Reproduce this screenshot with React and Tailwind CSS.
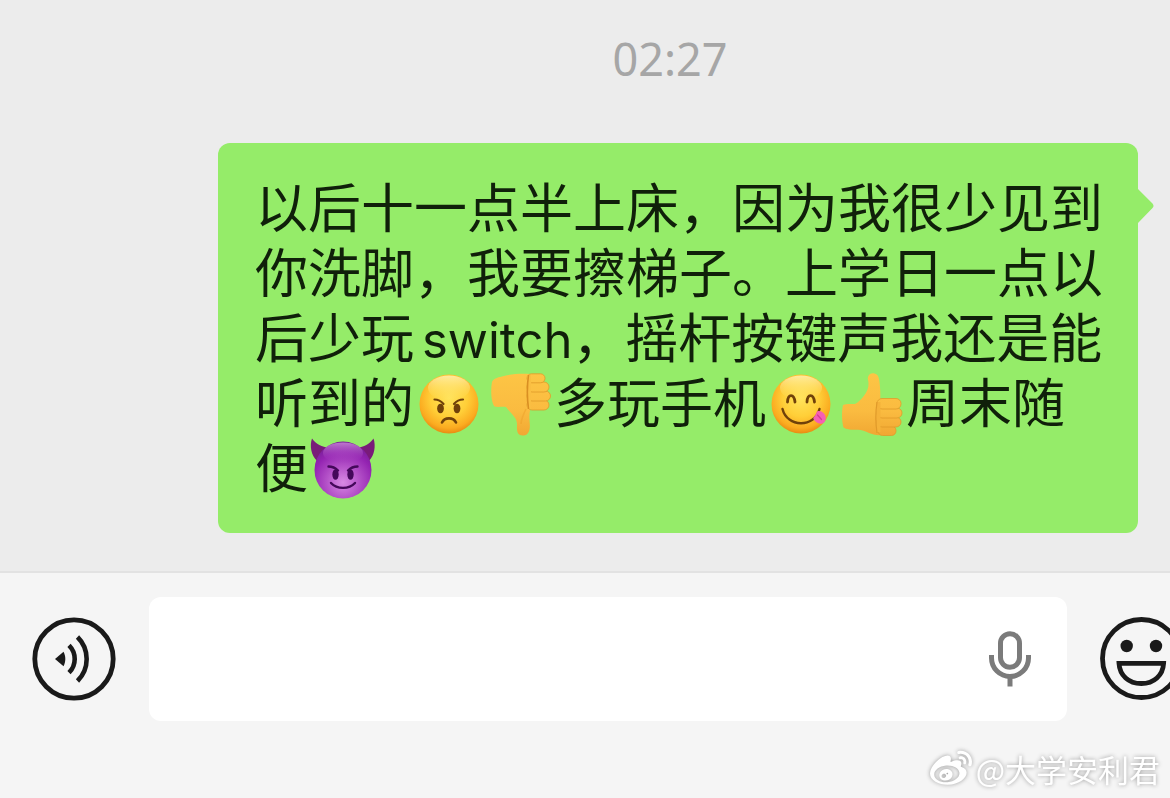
import { useState } from "react";
import { FaWeibo } from "react-icons/fa";

const emojiClass = "inline-block w-[70px] h-16 -my-3 align-[-2px]";

function FaceGradients({ id }) {
  return (
    <defs>
      <radialGradient id={`${id}-fill`} cx="0.5" cy="0.4" r="0.62">
        <stop offset="0" stopColor="#ffe35c" />
        <stop offset="0.5" stopColor="#ffcf38" />
        <stop offset="0.82" stopColor="#fbab20" />
        <stop offset="1" stopColor="#e4850f" />
      </radialGradient>
      <linearGradient id={`${id}-shine`} x1="0" y1="0" x2="0" y2="1">
        <stop offset="0" stopColor="#fffbd0" stopOpacity="0.7" />
        <stop offset="1" stopColor="#ffe566" stopOpacity="0" />
      </linearGradient>
    </defs>
  );
}

function AngryFace() {
  return (
    <svg viewBox="0 0 70 64" className={emojiClass} role="img" aria-label="angry face">
      <FaceGradients id="angry" />
      <circle cx="35" cy="31" r="29.5" fill="url(#angry-fill)" />
      <ellipse cx="35" cy="15" rx="21" ry="12.5" fill="url(#angry-shine)" />
      <ellipse cx="26.5" cy="35.5" rx="3.4" ry="4.8" fill="#70410a" />
      <ellipse cx="43" cy="35.5" rx="3.4" ry="4.8" fill="#70410a" />
      <g fill="none" stroke="#70410a" strokeLinecap="round" strokeWidth="2.2">
        <path d="M20.5 26.5c3.5 0 6.500 1.500 9 4.500" />
        <path d="M49 26.500c-3.500 0-6.500 1.500-9 4.500" />
        <path d="M28 49.500c2.500-5.500 11.500-5.500 14 0" strokeWidth="2.600" />
      </g>
    </svg>
  );
}

function YummyFace() {
  return (
    <svg viewBox="0 0 70 64" className={emojiClass} role="img" aria-label="face savoring food">
      <FaceGradients id="yummy" />
      <circle cx="35" cy="31" r="29.5" fill="url(#yummy-fill)" />
      <ellipse cx="35" cy="15" rx="21" ry="12.5" fill="url(#yummy-shine)" />
      <g fill="none" stroke="#70410a" strokeLinecap="round">
        <path d="M21.500 29c.5-8.500 6.500-8.500 7.500 0" strokeWidth="2.800" />
        <path d="M41 29c.5-8.500 6.500-8.500 7.500 0" strokeWidth="2.800" />
        <path d="M16.500 36c4.500 18.500 32 19.500 37 0" strokeWidth="2.400" />
      </g>
      <path
        d="M51 38.500c3-1.500 6.500.5 8 3.500 1.500 3.500.5 7-2 8.300-2.700 1.300-5.500 0-8-2.300-1.500-1.500-2-2.500-1.500-3.500 1.500-1.500 2.500-3.500 3.500-6z"
        fill="#f55fb4"
      />
      <path d="M51.500 42l4 4.500" stroke="#d43c94" strokeWidth="1.200" strokeLinecap="round" />
    </svg>
  );
}

function HandGradient({ id }) {
  return (
    <defs>
      <linearGradient id={id} x1="0" y1="0" x2="0" y2="64" gradientUnits="userSpaceOnUse">
        <stop offset="0" stopColor="#fdc545" />
        <stop offset="0.6" stopColor="#fabb40" />
        <stop offset="1" stopColor="#f0a632" />
      </linearGradient>
    </defs>
  );
}

function ThumbDown() {
  return (
    <svg viewBox="0 0 70 64" className={emojiClass} role="img" aria-label="thumbs down">
      <HandGradient id="thumb-down" />
      <path
        d="M8 9C9 6 13 4.500 18 3.500 27 1 36 .3 46 1v36.500c-.8 4.500-.7 8.500-.2 13.500.5 6-1.300 11-6.300 11.500-5.500.5-7-3.500-6.500-9.500.2-4-.5-6.500-3-9.500-3-3.500-5.500-6-8-9.500-3.500-.7-7.500.5-11.500-.5C7 29 6.500 17 8 9z"
        fill="url(#thumb-down)"
      />
      <path d="M42 36c-2 4-4.500 9-5 15" fill="none" stroke="#eda02a" strokeWidth="1.500" opacity="0.5" />
      <g fill="url(#thumb-down)" stroke="#e09a2a" strokeWidth="0.800">
        <rect x="43" y="27" width="22" height="10" rx="5" />
        <rect x="43" y="18" width="23.500" height="10" rx="5" />
        <rect x="43" y="9" width="22" height="10" rx="5" />
        <rect x="43" y="0.800" width="18" height="9" rx="4.500" />
      </g>
      <path d="M45 2v34" fill="none" stroke="#fabe42" strokeWidth="4" />
      <path d="M44.500 2c-1.500 11-1.500 23 0 34" fill="none" stroke="#d98f22" strokeWidth="1.600" />
    </svg>
  );
}

function ThumbUp() {
  return (
    <svg viewBox="0 0 70 64" className={emojiClass} role="img" aria-label="thumbs up">
      <HandGradient id="thumb-up" />
      <path
        d="M32 4C33 .5 36 0 38.500.5c3.500.8 4.500 4 5 8.500.7 6 1 11 .8 16.500L48 30v31.500c-5 1.500-11 .3-15-1.500-4-2-7.500-3.500-12-3.300-4.500.3-9.500.3-13.500-2.200-1.700-6-2-16-.5-22.500 4-1.500 8-.7 12-1 3-1.500 5.500-4 8-7 4-4.500 5.800-9.500 5.500-14 0-2.500-1.200-4-.5-6z"
        fill="url(#thumb-up)"
      />
      <g fill="url(#thumb-up)" stroke="#e09a2a" strokeWidth="0.800">
        <rect x="42" y="53" width="18" height="9.500" rx="4.500" />
        <rect x="41" y="44" width="24" height="10" rx="5" />
        <rect x="41" y="35" width="25" height="10" rx="5" />
        <rect x="41" y="25.500" width="24" height="10.500" rx="5" />
      </g>
      <path d="M42.500 29v30" fill="none" stroke="#f5b23a" strokeWidth="4" />
      <path d="M41 29c-1.500 10-1.500 21 0 31" fill="none" stroke="#e09a2a" strokeWidth="1.200" />
    </svg>
  );
}

function DevilFace() {
  return (
    <svg viewBox="0 0 70 64" className={emojiClass} role="img" aria-label="smiling devil">
      <defs>
        <radialGradient id="devil-fill" cx="0.5" cy="0.72" r="0.72">
          <stop offset="0" stopColor="#d88ae4" />
          <stop offset="0.4" stopColor="#b452c8" />
          <stop offset="0.75" stopColor="#9424b2" />
          <stop offset="1" stopColor="#761f96" />
        </radialGradient>
        <linearGradient id="devil-shine" x1="0" y1="0" x2="0" y2="1">
          <stop offset="0" stopColor="#cf8fdb" stopOpacity="0.8" />
          <stop offset="1" stopColor="#9a2bb8" stopOpacity="0" />
        </linearGradient>
      </defs>
      <path d="M4 .5C1.500 8 3 17 9 23l12-13C14 9 8 6 4 .5z" fill="#791b79" />
      <path d="M65.500.5C68 8 66.500 17 61 23L49 10C56 9 61.500 6 65.500.5z" fill="#791b79" />
      <circle cx="35" cy="32" r="28.500" fill="url(#devil-fill)" />
      <ellipse cx="35" cy="15" rx="20" ry="10.500" fill="url(#devil-shine)" />
      <ellipse cx="27.500" cy="36.500" rx="3.200" ry="5.200" fill="#44085a" />
      <ellipse cx="42.500" cy="36.500" rx="3.200" ry="5.200" fill="#44085a" />
      <g fill="none" stroke="#44085a" strokeLinecap="round" strokeWidth="2.400">
        <path d="M20.500 28.500c4 0 7 1.500 9.500 4" />
        <path d="M49.500 28.500c-4 0-7 1.500-9.500 4" />
        <path d="M23 45c6 6.500 18 6.500 24 0" />
      </g>
    </svg>
  );
}

function VoiceIcon() {
  return (
    <svg viewBox="0 0 84 84" className="w-full h-full" fill="none" stroke="#1a1a1a">
      <circle cx="42" cy="42" r="39.200" strokeWidth="4.800" />
      <path d="M23 42l8.500-7.200c2.400 4.400 2.400 10 0 14.400z" fill="#1a1a1a" stroke="none" />
      <path d="M37 28.300a19.300 19.300 0 0 1 0 27.400" strokeWidth="4.600" />
      <path d="M45.500 20a31 31 0 0 1 0 44" strokeWidth="4.600" />
    </svg>
  );
}

function SmileIcon() {
  return (
    <svg viewBox="0 0 84 84" className="w-full h-full" fill="none" stroke="#1a1a1a">
      <circle cx="41.500" cy="41.500" r="39" strokeWidth="4.800" />
      <circle cx="26.700" cy="29" r="6.200" fill="#1a1a1a" stroke="none" />
      <circle cx="56" cy="29" r="6.200" fill="#1a1a1a" stroke="none" />
      <path d="M19 46.300h44.600c-.7 12-9.600 20.200-22.300 20.200S19.700 58.300 19 46.300z" strokeWidth="4.800" />
    </svg>
  );
}

function MicIcon() {
  return (
    <svg viewBox="0 0 42 56" className="w-full h-full" fill="none" stroke="#7b7b7b" strokeWidth="5">
      <rect x="11.500" y="2.800" width="19" height="33.400" rx="9.500" />
      <path d="M2.500 24v3a18.500 18.500 0 0 0 37 0v-3" />
      <path d="M21 45v10.500" />
    </svg>
  );
}

function MessageBubble({ children }) {
  return (
    <div className="relative w-full rounded-xl bg-[#95ec69] pb-[35px] pl-[37px] pr-8 pt-[30px] text-[53px] leading-[65px] text-[#10200a]">
      {children}
      <svg viewBox="0 0 17 36" className="absolute left-full top-[45px] w-[17px] h-9" aria-hidden="true">
        <path d="M0 1l14.500 14.500q2 2.500 0 4.500L0 35z" fill="#95ec69" />
      </svg>
    </div>
  );
}

function App() {
  const [message, setMessage] = useState("");

  return (
    <div className="relative flex min-h-screen flex-col overflow-hidden bg-[#ececec] font-['Noto_Sans_CJK_SC',sans-serif]">
      <main className="flex-1 pb-[38px]">
        <time className="block pl-[170px] pt-[31px] text-center font-['Noto_Sans',sans-serif] text-[45px] leading-[56px] text-[#a6a6a6]">
          02:27
        </time>
        <div className="mt-14 pl-[218px] pr-8">
          <MessageBubble>
            <p>
              以后十一点半上床，因为我很少见到你洗脚，我要擦梯子。上学日一点以后少玩
              <span className="ml-2 font-['Inter',sans-serif] text-[49px] leading-none">switch</span>
              ，摇杆按键声我还是能听到的
              <AngryFace />
              <ThumbDown />
              多玩手机
              <YummyFace />
              <ThumbUp />
              周末随便
              <DevilFace />
            </p>
          </MessageBubble>
        </div>
      </main>

      <footer className="flex items-start border-t-2 border-[#e2e2e2] bg-[#f5f5f5] pb-[77px] pl-8 pt-6">
        <button type="button" aria-label="Voice message" className="mt-5 h-[84px] w-[84px] shrink-0">
          <VoiceIcon />
        </button>
        <div className="mx-[33px] flex h-[124px] flex-1 items-center rounded-xl bg-white pl-6 pr-9">
          <input
            type="text"
            aria-label="Message"
            value={message}
            onChange={(e) => setMessage(e.target.value)}
            className="h-full min-w-0 flex-1 bg-transparent text-[53px] text-[#10200a] outline-none"
          />
          <button type="button" aria-label="Dictate" className="h-14 w-[42px] shrink-0">
            <MicIcon />
          </button>
        </div>
        <button type="button" aria-label="Emoji" className="-mr-[14px] mt-5 h-[84px] w-[84px] shrink-0">
          <SmileIcon />
        </button>
      </footer>

      <div className="absolute bottom-2 right-2.5 flex items-center gap-1 text-[31px] leading-[42px] text-white drop-shadow-[0_0_2px_#999999]">
        <FaWeibo className="h-[42px] w-[42px]" />
        <span>@大学安利君</span>
      </div>
    </div>
  );
}

export default App;
